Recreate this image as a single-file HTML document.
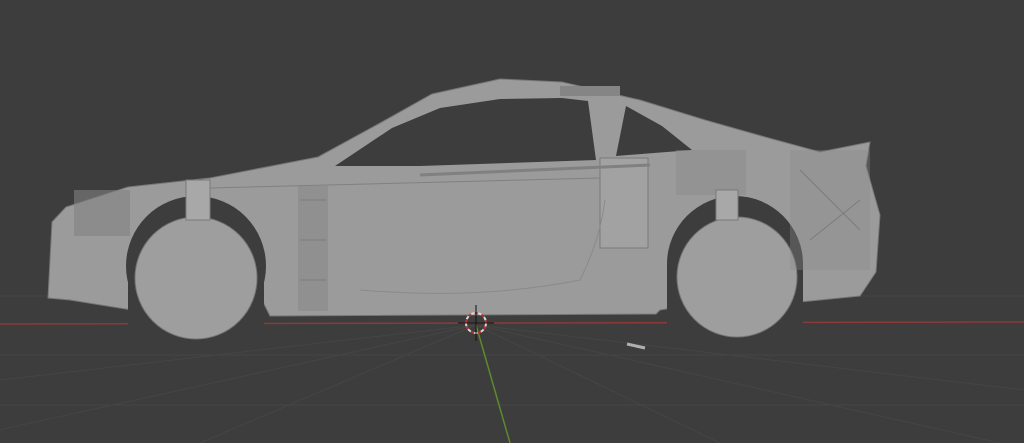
<!DOCTYPE html>
<html><head><meta charset="utf-8"><style>
html,body{margin:0;padding:0;background:#3d3d3d;width:1024px;height:443px;overflow:hidden}
svg{display:block}
</style></head><body>
<svg width="1024" height="443" viewBox="0 0 1024 443" xmlns="http://www.w3.org/2000/svg">
<rect width="1024" height="443" fill="#3d3d3d"/>
<g stroke="#454545" stroke-width="1" fill="none">
<line x1="0" y1="296" x2="1024" y2="296"/>
<line x1="0" y1="355" x2="1024" y2="355"/>
<line x1="0" y1="405" x2="1024" y2="405"/>
<line x1="476" y1="325" x2="200" y2="443"/>
<line x1="476" y1="325" x2="-60" y2="443"/>
<line x1="476" y1="325" x2="720" y2="443"/>
<line x1="476" y1="325" x2="1000" y2="443"/>
<line x1="476" y1="325" x2="1024" y2="390"/>
<line x1="476" y1="325" x2="0" y2="380"/>
</g>
<line x1="0" y1="324" x2="1024" y2="322" stroke="#8a3a3a" stroke-width="1.5"/>
<line x1="476" y1="325" x2="510" y2="443" stroke="#5e8a2e" stroke-width="1.5"/>
<polygon fill="#9b9b9b" stroke="#777" stroke-width="1" points="48,298 52,222 66,207 128,187 210,178 318,157 382,122 432,94 500,79 562,82 640,100 705,120 765,137 820,152 870,142 866,166 880,215 876,272 860,296 800,302 790,290 660,310 656,314 270,316 262,300 132,310 70,300"/>
<circle cx="196" cy="266" r="70" fill="#3d3d3d"/>
<circle cx="735" cy="264" r="68" fill="#3d3d3d"/>
<rect x="128" y="266" width="136" height="60" fill="#3d3d3d"/>
<rect x="667" y="264" width="136" height="60" fill="#3d3d3d"/>
<circle cx="196" cy="278" r="61" fill="#9e9e9e" stroke="#777"/>
<circle cx="737" cy="277" r="60" fill="#9e9e9e" stroke="#777"/>
<polygon fill="#3d3d3d" points="335,166 392,128 440,108 500,99 562,98 588,101 596,160 420,166"/>
<polygon fill="#3d3d3d" points="616,156 626,106 662,126 692,150"/>
<rect x="600" y="158" width="48" height="90" fill="#a2a2a2" stroke="#7a7a7a"/>
<line x1="420" y1="175" x2="650" y2="165" stroke="#808080" stroke-width="3"/>
<line x1="210" y1="188" x2="600" y2="178" stroke="#808080"/>
<rect x="298" y="186" width="30" height="125" fill="#8c8c8c" opacity="0.7"/>
<rect x="74" y="190" width="56" height="46" fill="#828282" opacity="0.6"/>
<rect x="790" y="150" width="80" height="120" fill="#8a8a8a" opacity="0.35"/>
<rect x="676" y="150" width="70" height="45" fill="#8a8a8a" opacity="0.45"/>
<rect x="560" y="86" width="60" height="10" fill="#858585"/>
<path d="M360 290 Q480 300 580 280 Q600 240 605 200" stroke="#8a8a8a" fill="none"/>
<rect x="186" y="180" width="24" height="40" fill="#a8a8a8" stroke="#7a7a7a"/>
<rect x="716" y="190" width="22" height="30" fill="#a8a8a8" stroke="#7a7a7a"/>
<g stroke="#7c7c7c" stroke-width="1">
<line x1="300" y1="200" x2="326" y2="200"/><line x1="300" y1="240" x2="326" y2="240"/><line x1="300" y1="280" x2="326" y2="280"/>
<line x1="800" y1="170" x2="860" y2="230"/><line x1="810" y1="240" x2="860" y2="200"/>
</g>
<circle cx="476" cy="323" r="10" fill="none" stroke="#d8d8d8" stroke-width="2" stroke-dasharray="4 3"/>
<circle cx="476" cy="323" r="10" fill="none" stroke="#c03030" stroke-width="2" stroke-dasharray="3 4" stroke-dashoffset="3.5"/>
<line x1="476" y1="305" x2="476" y2="341" stroke="#111"/>
<line x1="458" y1="323" x2="494" y2="323" stroke="#111"/>
<line x1="627" y1="344" x2="645" y2="348" stroke="#b0b0b0" stroke-width="3"/>
</svg>
</body></html>
